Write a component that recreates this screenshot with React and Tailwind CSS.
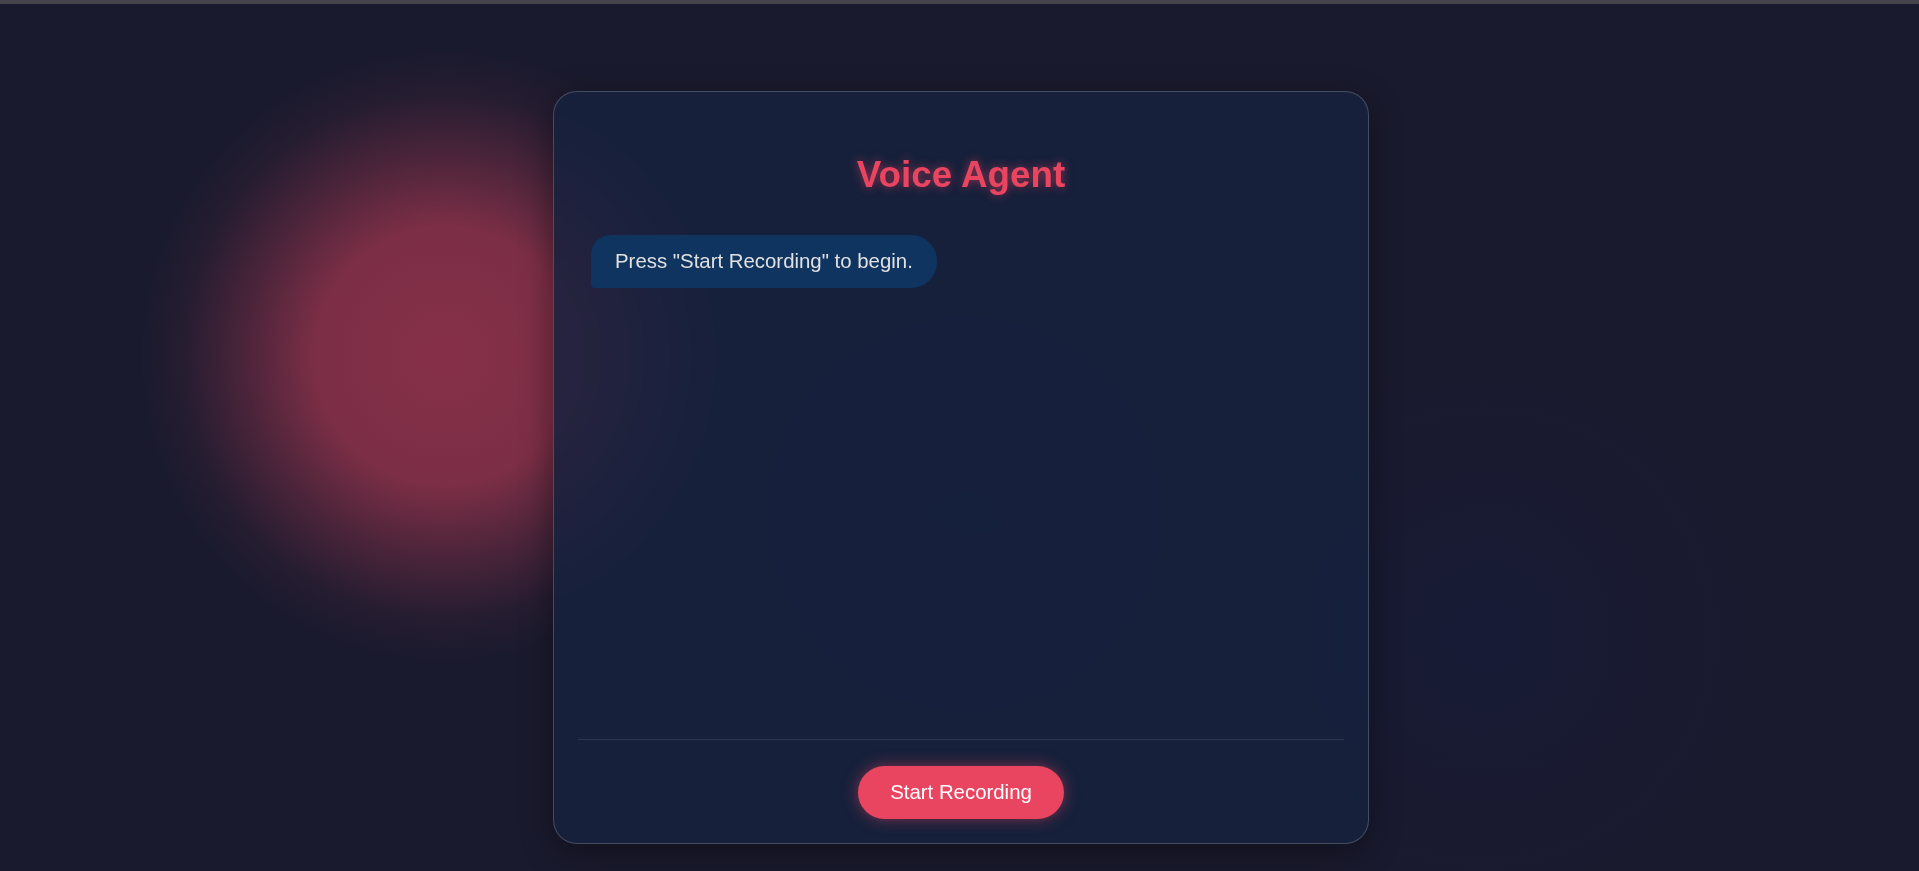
import React from "react";

const App = () => {
  return (
    <div className="min-h-screen w-full border-t-4 border-[#44444a] bg-[#1a1a2e] bg-[radial-gradient(circle_at_445px_352px,rgba(233,69,96,0.52)_0px,rgba(233,69,96,0.47)_130px,rgba(233,69,96,0.24)_200px,rgba(233,69,96,0.06)_262px,transparent_305px),radial-gradient(circle_at_1485px_632px,rgba(15,28,70,0.28)_0px,rgba(15,28,70,0.12)_160px,transparent_290px),radial-gradient(circle_at_965px_510px,rgba(20,32,80,0.3)_0px,transparent_260px)] font-['Liberation_Sans',Arial,sans-serif]">
      <div className="pt-[87px] pb-6 pl-[3px]">
        <div className="mx-auto flex h-[753px] w-[816px] flex-col rounded-3xl border border-white/20 bg-[rgba(22,33,62,0.84)] p-6 shadow-[0_8px_32px_rgba(0,0,0,0.4)] backdrop-blur-md">
          <h1 className="mt-[38px] text-center text-[36.8px] font-bold leading-[41px] text-[#e94560] [text-shadow:0_0_10px_rgba(233,69,96,0.6)]">
            Voice Agent
          </h1>

          <div className="flex-1 px-[13px] pt-10">
            <div className="inline-block rounded-[26px] rounded-tl-[20px] rounded-bl-[4px] bg-[#0f3460] px-6 py-[15px] text-[20.4px] leading-[23px] text-[#e0e0e0]">
              Press "Start Recording" to begin.
            </div>
          </div>

          <div className="flex justify-center border-t border-white/10 pt-[26px]">
            <button className="rounded-full bg-[#e94560] px-8 py-[15px] text-[20.4px] leading-[23px] text-white shadow-[0_0_15px_rgba(233,69,96,0.5)]">
              Start Recording
            </button>
          </div>
        </div>
      </div>
    </div>
  );
};

export default App;
